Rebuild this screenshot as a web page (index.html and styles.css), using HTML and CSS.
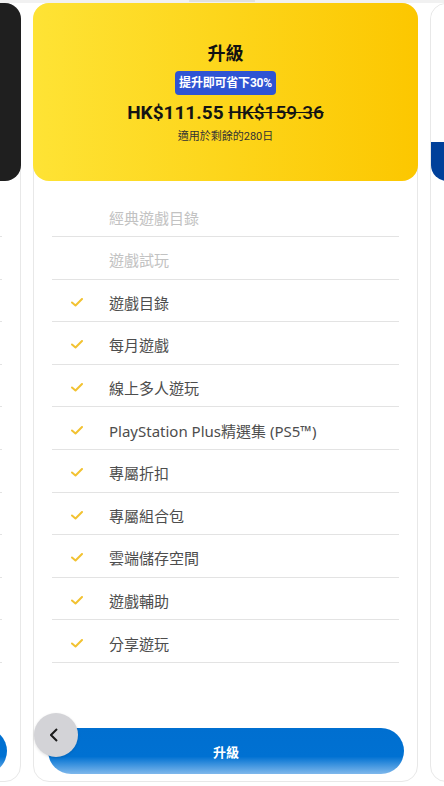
FILE: index.html
```html
<!DOCTYPE html>
<html>
  <head>
    <title>升級</title>
    <meta charset="UTF-8">
    <meta name="viewport" content="width=device-width,initial-scale=1">
    <link rel="stylesheet" href="styles.css">
  </head>
  <body>
    <div class="topbar"><div class="topbar_pill"></div></div>
    <div class="track">
      <!-- 左のカード（見切れ） -->
      <div class="card">
        <div class="head head_dark"></div>
        <ul class="features">
          <li class="row"></li><li class="row"></li><li class="row"></li><li class="row"></li>
          <li class="row"></li><li class="row"></li><li class="row"></li><li class="row"></li>
          <li class="row"></li><li class="row"></li><li class="row"></li>
        </ul>
        <div class="buy"></div>
      </div>

      <!-- 真ん中のカード -->
      <div class="card">
        <div class="head head_yellow">
          <div class="head_title">升級</div>
          <div class="badge">提升即可省下30%</div>
          <div class="price">
            <span class="price_now">HK$111.55</span>
            <span class="price_old">HK$159.36</span>
          </div>
          <div class="head_note">適用於剩餘的280日</div>
        </div>
        <ul class="features">
          <li class="row off"><span class="tick"></span><span>經典遊戲目錄</span></li>
          <li class="row off"><span class="tick"></span><span>遊戲試玩</span></li>
          <li class="row"><svg class="tick" viewBox="0 0 12 9"><polyline points="1,4.5 4.5,7.5 11,1"/></svg><span>遊戲目錄</span></li>
          <li class="row"><svg class="tick" viewBox="0 0 12 9"><polyline points="1,4.5 4.5,7.5 11,1"/></svg><span>每月遊戲</span></li>
          <li class="row"><svg class="tick" viewBox="0 0 12 9"><polyline points="1,4.5 4.5,7.5 11,1"/></svg><span>線上多人遊玩</span></li>
          <li class="row"><svg class="tick" viewBox="0 0 12 9"><polyline points="1,4.5 4.5,7.5 11,1"/></svg><span>PlayStation Plus精選集 (PS5™)</span></li>
          <li class="row"><svg class="tick" viewBox="0 0 12 9"><polyline points="1,4.5 4.5,7.5 11,1"/></svg><span>專屬折扣</span></li>
          <li class="row"><svg class="tick" viewBox="0 0 12 9"><polyline points="1,4.5 4.5,7.5 11,1"/></svg><span>專屬組合包</span></li>
          <li class="row"><svg class="tick" viewBox="0 0 12 9"><polyline points="1,4.5 4.5,7.5 11,1"/></svg><span>雲端儲存空間</span></li>
          <li class="row"><svg class="tick" viewBox="0 0 12 9"><polyline points="1,4.5 4.5,7.5 11,1"/></svg><span>遊戲輔助</span></li>
          <li class="row"><svg class="tick" viewBox="0 0 12 9"><polyline points="1,4.5 4.5,7.5 11,1"/></svg><span>分享遊玩</span></li>
        </ul>
        <div class="buy">升級</div>
      </div>

      <!-- 右のカード（見切れ） -->
      <div class="card">
        <div class="head head_blue"></div>
      </div>
    </div>

    <div class="back">
      <svg viewBox="0 0 8 14"><polyline points="7,1 1,7 7,13"/></svg>
    </div>
  </body>
</html>
```

FILE: styles.css
```css
body
{
  margin: 0;
  padding: 0;
  height: 786px;
  overflow: hidden;
  background: #ffffff;
  font-family: "Noto Sans", "Noto Sans CJK TC", sans-serif;
  color: #4a4a4a;
}
.topbar
{
  height: 3px;
  background: #f1f1f1;
  display: flex;
  justify-content: center;
}
.topbar_pill
{
  width: 66px;
  height: 2px;
  background: #e0e0e0;
}
.track
{
  display: flex;
  gap: 12px;
  margin-left: -364px; /* 左のカードを見切れさせる */
}
.card
{
  flex: none;
  width: 385px;
  height: 779px;
  box-sizing: border-box;
  border: 1px solid #e8e8e8;
  border-radius: 16px;
  background: #ffffff;
  display: flex;
  flex-direction: column;
}
.head
{
  margin: -1px -1px 0;
  height: 178px;
  border-radius: 16px;
  box-sizing: border-box;
  flex: none;
}
.head_dark
{
  background: #1f1f1f;
}
.head_blue
{
  margin: 0;
  height: 177px;
  background: linear-gradient(to bottom, #ffffff 138px, #00409a 138px);
}
.head_yellow
{
  background: linear-gradient(90deg, #fee335, #fcc700);
  display: flex;
  flex-direction: column;
  align-items: center;
  padding-top: 37px;
  color: #111111;
}
.head_title
{
  font-family: "Noto Sans CJK TC", sans-serif;
  font-size: 18px;
  line-height: 24px;
  font-weight: 700;
}
.badge
{
  margin-top: 7px;
  height: 24px;
  line-height: 24px;
  padding: 0 4px;
  border-radius: 4px;
  background: #2f54d3;
  color: #ffffff;
  font-family: Roboto, "Noto Sans CJK TC", sans-serif;
  font-size: 12px;
  font-weight: 700;
  letter-spacing: -0.2px;
}
.price
{
  margin-top: 6px;
  line-height: 24px;
  font-family: Roboto, sans-serif;
  font-size: 19px;
  font-weight: 700;
  color: #141414;
}
.price_old
{
  font-weight: 500;
  text-decoration: line-through;
}
.head_note
{
  margin-top: 4px;
  line-height: 16px;
  font-family: Roboto, "Noto Sans CJK TC", sans-serif;
  font-size: 11px;
  color: #333333;
}
.features
{
  list-style: none;
  margin: 13.4px 18px 0;
  padding: 0;
}
.row
{
  height: 42.6px;
  box-sizing: border-box;
  border-bottom: 1px solid #e3e3e3;
  padding: 4px 0 0 19px;
  display: flex;
  align-items: center;
  font-size: 15px;
  color: #4d4d4d;
}
.row.off
{
  color: #c2c2c2;
}
.tick
{
  width: 12px;
  height: 9px;
  margin-right: 26px;
  flex: none;
}
.tick polyline
{
  fill: none;
  stroke: #f2c231;
  stroke-width: 2;
  stroke-linecap: round;
  stroke-linejoin: round;
}
.buy
{
  margin: auto 13px 7px 14px;
  height: 46px;
  line-height: 48px;
  border-radius: 23px;
  background: linear-gradient(to bottom, #006fd0 0%, #0071d2 62%, #7fb8ec 100%);
  color: #ffffff;
  text-align: center;
  font-family: "Noto Sans CJK TC", sans-serif;
  font-size: 13px;
  font-weight: 700;
}
.back
{
  position: absolute; /* 浮いている戻るボタン */
  left: 34px;
  top: 713px;
  width: 44px;
  height: 44px;
  border-radius: 50%;
  background: #d3d3d7;
  box-shadow: 0 1px 3px rgba(0, 0, 0, 0.12);
  display: flex;
  justify-content: center;
  align-items: center;
}
.back svg
{
  width: 8px;
  height: 14px;
  margin-left: -4px;
  fill: none;
  stroke: #1a1a1a;
  stroke-width: 2;
}
```
